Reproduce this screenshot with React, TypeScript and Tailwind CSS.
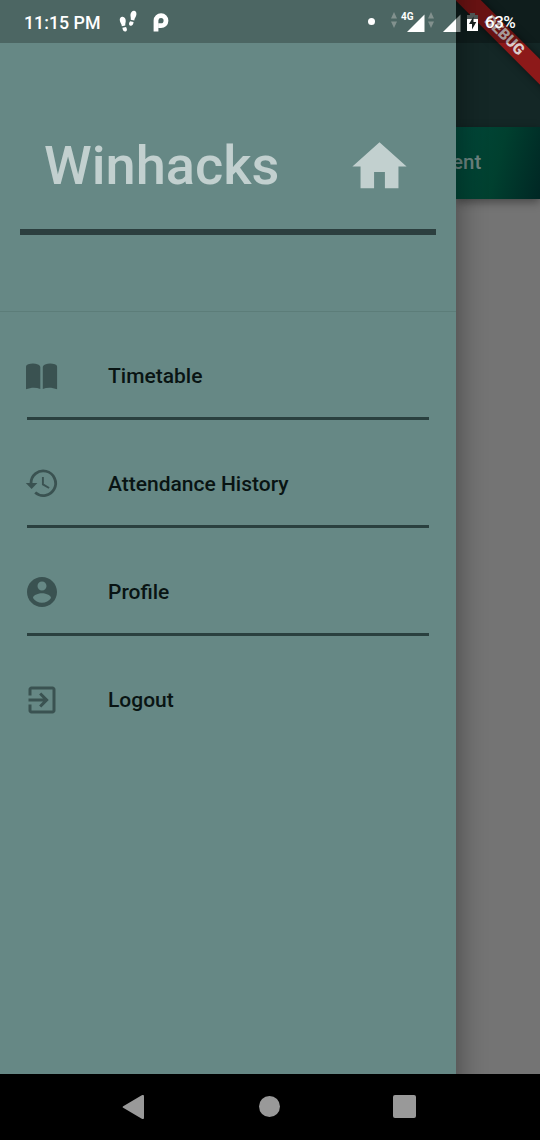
import type { ReactNode } from "react";

type IconProps = { className?: string };

function BookIcon({ className }: IconProps) {
  return (
    <svg viewBox="0 0 36 36" className={className} fill="currentColor">
      <path d="M2 9c0-1.300.8-2.200 2.200-2.700 3.300-1.100 6.500-1.100 9.800.2 1.500.6 2.300 1.500 2.300 2.800v21.600c-4.200-1.800-9.500-1.600-14.300.3z" />
      <path d="M33.100 9c0-1.300-.8-2.200-2.200-2.700-3.300-1.100-6.500-1.100-9.800.2-1.500.6-2.300 1.500-2.300 2.800v21.600c4.200-1.800 9.500-1.600 14.300.3z" />
    </svg>
  );
}

function HistoryIcon({ className }: IconProps) {
  return (
    <svg viewBox="0 0 36 36" className={className}>
      <path
        d="M7 17.500A12.300 12.300 0 1 1 11.200 26.500"
        fill="none"
        stroke="currentColor"
        strokeWidth="2.800"
      />
      <path d="M1.800 16.900h11.600L7.600 23.100z" fill="currentColor" />
      <path
        d="M18.900 11v7.400l6.200 3.600"
        fill="none"
        stroke="currentColor"
        strokeWidth="1.900"
      />
    </svg>
  );
}

function ProfileIcon({ className }: IconProps) {
  return (
    <svg viewBox="0 0 24 24" className={className} fill="currentColor">
      <path d="M12 2C6.480 2 2 6.480 2 12s4.480 10 10 10 10-4.480 10-10S17.520 2 12 2zm0 3c1.660 0 3 1.340 3 3s-1.340 3-3 3-3-1.340-3-3 1.340-3 3-3zm0 14.200c-2.500 0-4.710-1.280-6-3.220.03-1.990 4-3.080 6-3.080 1.990 0 5.970 1.090 6 3.080-1.290 1.940-3.500 3.220-6 3.220z" />
    </svg>
  );
}

function LogoutIcon({ className }: IconProps) {
  return (
    <svg viewBox="0 0 24 24" className={className} fill="currentColor">
      <path d="M10.090 15.590L11.500 17l5-5-5-5-1.410 1.410L12.670 11H3v2h9.670l-2.580 2.590zM19 3H5c-1.110 0-2 .9-2 2v4h2V5h14v14H5v-4H3v4c0 1.100.89 2 2 2h14c1.100 0 2-.9 2-2V5c0-1.100-.9-2-2-2z" />
    </svg>
  );
}

function DataArrows({ className }: IconProps) {
  return (
    <svg viewBox="0 0 6 16" className={className} fill="#82918e">
      <path d="M3 0l3 6.500H0zM3 16l3-6.500H0z" />
    </svg>
  );
}

function FullSignal({ className }: IconProps) {
  return (
    <svg viewBox="0 0 18 18" className={className} fill="#fff">
      <path d="M17.500.500V18H0z" />
    </svg>
  );
}

function PartialSignal({ className }: IconProps) {
  return (
    <svg viewBox="0 0 18 18" className={className}>
      <path d="M17.500.500V18H0z" fill="#77817f" />
      <path d="M13 5v13H0z" fill="#fff" />
    </svg>
  );
}

function StatusBar() {
  return (
    <div className="absolute inset-x-0 top-0 flex h-[43px] items-center bg-black/25 text-white">
      <span className="ml-6 mt-0.5 w-[95px] text-[17.800px] font-medium leading-none">
        11:15 PM
      </span>
      <svg viewBox="-.5 -.5 19 24" className="h-6 w-[18px]" fill="#fff">
        <path d="M.3 9.500C.2 7 1.500 5.700 3.300 5.900c2.200.2 3.600 2.600 3.300 5.100-.2 1.600-.6 2.400-.4 4.100l-3.700.8C2.300 13.500.5 12.300.3 9.500z" />
        <path d="M3.100 17.600l3.700-.8c1.300 1.400 1.700 4.300-.3 4.700-2 .5-3.200-1.500-3.400-3.900z" />
        <path d="M17.900 3.300C18.100.9 16.800-.5 15-.3c-2.200.2-3.700 2.700-3.400 5.200.2 1.600.5 2.400.3 4.100l3.700.8c.2-2.400 2.100-3.700 2.300-6.500z" />
        <path d="M14.900 11.500l-3.600-.8c-1.400 1.400-1.800 4.200.2 4.700 2 .4 3.100-1.500 3.400-3.900z" />
      </svg>
      <svg viewBox="0 0 16 19" className="ml-4 mt-0.5 h-[19px] w-4" fill="none">
        <path
          d="M3 18.500V7.500a5 5 0 1 1 5 5.200H5.500"
          stroke="#fff"
          strokeWidth="4.800"
        />
      </svg>
      <span className="ml-[199px] size-[7px] rounded-full bg-white" />
      <DataArrows className="ml-4 mb-1 h-4 w-1.5" />
      <span className="mb-2.5 ml-1 w-1.5 whitespace-nowrap text-[10px] font-bold leading-none">
        4G
      </span>
      <FullSignal className="mt-0.5 size-[18px]" />
      <DataArrows className="ml-[3px] mb-1 h-4 w-1.5" />
      <PartialSignal className="ml-[9px] mt-0.5 size-[18px]" />
      <svg viewBox="0 0 11 18" className="ml-[6px] h-[18px] w-[11px]">
        <path d="M3 0h5v2h3v5H0V2h3z" fill="#4d5554" />
        <path d="M0 6h11v12H0z" fill="#fff" />
        <path d="M6.500 3.500L2 11h3v5.500L9.300 9H6.500z" fill="#17211f" />
      </svg>
      <span className="ml-[7px] mt-0.5 text-[17px] font-medium leading-none tracking-[-0.500px]">
        63%
      </span>
    </div>
  );
}

function DebugBanner() {
  return (
    <div className="absolute left-[404px] top-[27px] flex h-[18px] w-[200px] rotate-45 items-center justify-center bg-[#8d1919] shadow-[0_0_9px_rgba(0,0,0,0.5)]">
      <span className="text-[15.300px] font-black leading-none text-[#dccccc]">
        DEBUG
      </span>
    </div>
  );
}

function MenuItem({
  icon,
  label,
  divider = true,
}: {
  icon: ReactNode;
  label: string;
  divider?: boolean;
}) {
  return (
    <li className="flex h-[108px] flex-col px-[27px]">
      <div className="-ml-[3px] flex h-[84px] items-center pt-px">
        {icon}
        <span className="ml-12 mt-px text-[21px] font-medium leading-none text-[#091413]">
          {label}
        </span>
      </div>
      {divider && <div className="h-[3px] bg-[#2a403f]" />}
    </li>
  );
}

export default function App() {
  return (
    <div
      className="relative flex h-[1140px] w-[540px] flex-col overflow-hidden bg-black"
      style={{ fontFamily: "Roboto, sans-serif" }}
    >
      <div className="relative flex flex-1 overflow-hidden">
        {/* bleeds past the clipped top and bottom so the shadow stays even */}
        <aside className="z-10 -my-12 flex w-[456px] flex-col bg-[#668885] py-12 shadow-[2px_0_24px_4px_rgba(0,0,0,0.3)]">
          <header className="flex h-[312px] flex-col border-b border-[#5c7d79] pl-5 pr-[20.500px] pt-[101px]">
            <div className="flex h-32 items-center justify-between pl-6 pr-[23.500px] pt-0.5">
              <h1 className="text-[54.200px] font-medium leading-none text-[#c2d0cf]">
                Winhacks
              </h1>
              <svg viewBox="0 0 24 24" className="size-[65px] text-[#c2d0cf]" fill="currentColor">
                <path d="M10 20v-6h4v6h5v-8h3L12 3 2 12h3v8z" />
              </svg>
            </div>
            <div className="h-1.5 bg-[#2c3f3f]" />
          </header>
          <ul className="pt-[21px] text-[#3a5251]">
            <MenuItem icon={<BookIcon className="size-9" />} label="Timetable" />
            <MenuItem icon={<HistoryIcon className="size-9" />} label="Attendance History" />
            <MenuItem icon={<ProfileIcon className="size-9" />} label="Profile" />
            <MenuItem icon={<LogoutIcon className="size-9" />} label="Logout" divider={false} />
          </ul>
        </aside>
        <main className="flex flex-1 flex-col bg-[#747474]">
          <div className="h-[127px] bg-[#142726]" />
          <div className="flex h-[72px] items-center bg-linear-105 from-[#00483a] via-[#00402f] to-[#002724] pb-0.5 shadow-[0_3px_9px_rgba(0,0,0,0.4)]">
            <span className="-ml-1 text-[20.500px] font-medium leading-none text-[#6c8480]">
              ent
            </span>
          </div>
        </main>
      </div>
      <nav className="flex h-[66px] items-center bg-black pb-px">
        <svg viewBox="0 0 22 26" className="ml-[122px] h-[26px] w-[22px]" fill="#999">
          <path d="M1.200 12.200L19.800 1.200c1.200-.7 2.200-.2 2.200 1v21.600c0 1.200-1 1.700-2.200 1L1.200 13.800c-.8-.5-.8-1.100 0-1.600z" />
        </svg>
        <span className="ml-[115px] size-[21px] rounded-full bg-[#999]" />
        <span className="ml-[113px] size-[23px] rounded-[2px] bg-[#999]" />
      </nav>
      <DebugBanner />
      <div className="z-20">
        <StatusBar />
      </div>
    </div>
  );
}
